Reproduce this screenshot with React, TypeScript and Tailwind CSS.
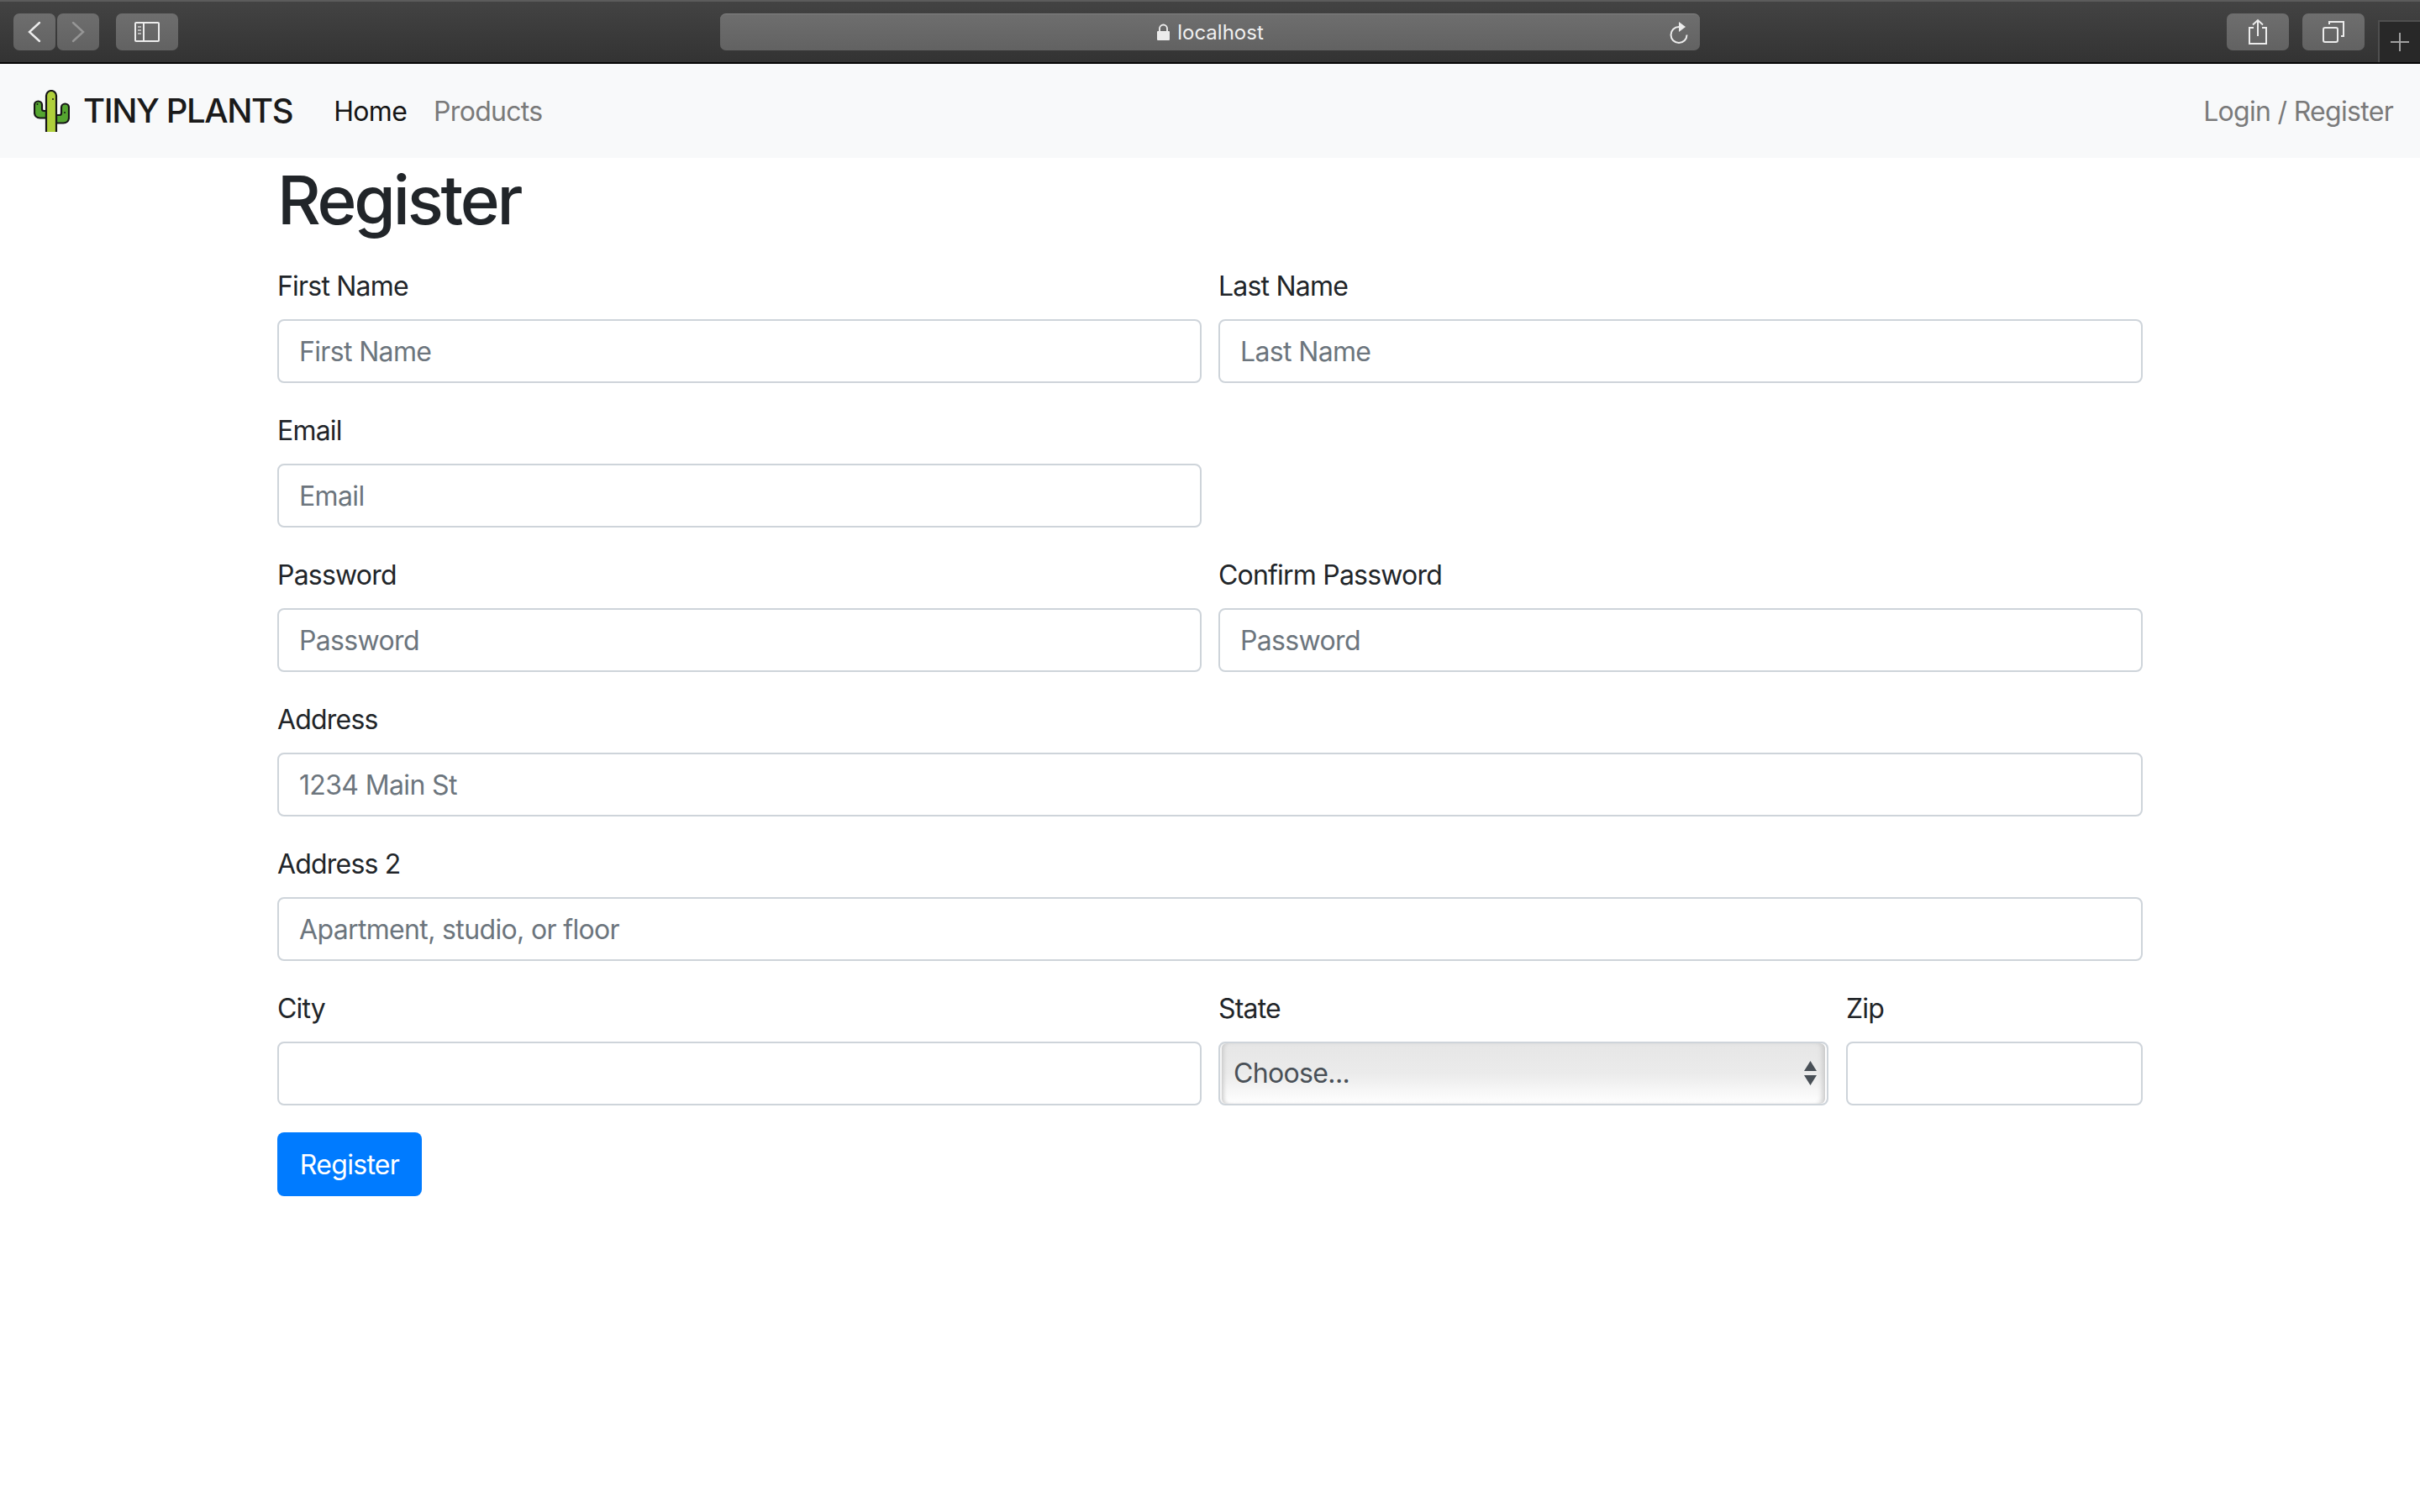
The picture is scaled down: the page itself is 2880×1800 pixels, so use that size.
import { ReactNode } from 'react';

const font = "font-['Inter','Liberation_Sans',sans-serif]";

function ToolButton({ className, children }: { className: string; children: ReactNode }) {
    return (
        <div className={`${className} h-[44px] flex items-center justify-center bg-gradient-to-b from-[#6e6e6e] to-[#626262]`}>
            {children}
        </div>
    );
}

function BrowserBar() {
    return (
        <div className="relative h-[76px] flex items-start justify-between pt-[14px] pl-[16px] pr-[66px] border-b-2 border-[#050505] border-t-2 border-t-[#5c5c5c] bg-gradient-to-b from-[#434343] to-[#333333]">
            <div className="flex">
                <ToolButton className="w-[50px] rounded-[7px]">
                    <svg width="16" height="26" viewBox="0 0 16 26" fill="none" stroke="#ececec" strokeWidth="2.4" strokeLinecap="round"><path d="M14 2 2 13l12 11" /></svg>
                </ToolButton>
                <ToolButton className="w-[50px] ml-[2px] rounded-[7px]">
                    <svg width="16" height="26" viewBox="0 0 16 26" fill="none" stroke="#969696" strokeWidth="2.4" strokeLinecap="round"><path d="M2 2l12 11L2 24" /></svg>
                </ToolButton>
                <ToolButton className="w-[74px] ml-[20px] rounded-[7px]">
                    <svg width="30" height="24" viewBox="0 0 30 24" fill="none" stroke="#ececec" strokeWidth="2">
                        <rect x="1" y="1" width="28" height="22" rx="1" />
                        <path d="M11 1v22" />
                        <path d="M4 6h4M4 10h4M4 14h4" stroke="#b5b5b5" />
                    </svg>
                </ToolButton>
            </div>
            <ToolButton className="absolute left-[857px] top-[14px] w-[1166px] rounded-[7px] border-t border-[#808080]">
                <div className="flex items-center gap-[8px]">
                    <svg width="17" height="21" viewBox="0 0 17 21" fill="none">
                        <path d="M4 10V6a4.500 4.500 0 0 1 9 0v4" stroke="#ececec" strokeWidth="1.9" />
                        <rect x="1" y="9" width="15" height="11" rx="1" fill="#ececec" />
                    </svg>
                    <span className="mt-[1px] text-[24px] leading-none text-[#f0f0f0]">localhost</span>
                </div>
                <svg className="absolute right-[13px] top-[8px]" width="24" height="28" viewBox="0 0 24 28" fill="none" stroke="#ececec" strokeWidth="2">
                    <path d="M12 7a9.500 9.500 0 1 0 9.500 9.500" />
                    <path d="M12 1l8 6-8 6z" fill="#ececec" stroke="none" />
                </svg>
            </ToolButton>
            <div className="flex gap-[16px]">
                <ToolButton className="w-[74px] rounded-[7px]">
                    <svg width="24" height="32" viewBox="0 0 24 32" fill="none" stroke="#ececec" strokeWidth="2">
                        <path d="M7 11H2v19h20V11h-5" />
                        <path d="M12 21V2M6 7.500 12 2l6 5.500" />
                    </svg>
                </ToolButton>
                <ToolButton className="w-[74px] rounded-[7px]">
                    <svg width="26" height="26" viewBox="0 0 26 26" fill="none" stroke="#ececec" strokeWidth="2">
                        <rect x="1" y="8" width="17" height="17" rx="2" />
                        <path d="M8 4V1h17v17h-3" />
                    </svg>
                </ToolButton>
            </div>
            <div className="absolute right-0 bottom-0 w-[50px] h-[50px] flex items-center justify-center bg-[#282828] border-l-2 border-t-2 border-[#4f4f4f]">
                <svg width="24" height="24" viewBox="0 0 24 24" stroke="#a0a0a0" strokeWidth="2"><path d="M12 1v22M1 12h22" /></svg>
            </div>
        </div>
    );
}

function Cactus() {
    return (
        <svg width="43" height="50" viewBox="0 0 43 50" fill="none" stroke="#161616" strokeWidth="2.2">
            <path d="M15 25h-3c-1.500 0-2-1-2-2.500V18a4.500 4.500 0 0 0-9 0v9c0 4 3 6.500 6.500 6.500H15z" fill="#55a630" />
            <path d="M27 30h4c1.500 0 2-1 2-2.500V21a4.500 4.500 0 0 1 9 0v12c0 4-3 6.500-6.500 6.500H27z" fill="#55a630" />
            <path d="M15 50V7a6 6 0 0 1 12 0v43" fill="#afcf3b" />
            <circle cx="23" cy="11" r="1" fill="#161616" stroke="none" />
            <circle cx="4.500" cy="17" r="1" fill="#161616" stroke="none" />
            <circle cx="37" cy="27" r="1" fill="#161616" stroke="none" />
        </svg>
    );
}

function Navbar() {
    return (
        <nav className="h-[112px] bg-[#f8f9fa] flex items-center pl-[40px] pr-[32px]">
            <Cactus />
            <span className="ml-[16px] text-[40px] leading-none tracking-[-1.4px] font-medium text-[#1a1a1a]">TINY PLANTS</span>
            <span className="ml-[49px] mt-[1px] text-[32px] leading-none tracking-[-0.7px] text-[#151515]">Home</span>
            <span className="ml-[32px] mt-[1px] text-[32px] leading-none tracking-[-0.7px] text-[#7a7a7a]">Products</span>
            <span className="ml-auto mt-[1px] text-[32px] leading-none tracking-[-0.7px] text-[#7a7a7a]">Login / Register</span>
        </nav>
    );
}

function Label({ children }: { children: ReactNode }) {
    return <label className="block h-[48px] leading-[48px] mb-[16px] pt-[1px] text-[32px] tracking-[-0.8px] text-[#212529]">{children}</label>;
}

function Field({ label, placeholder, className = '' }: { label: string; placeholder?: string; className?: string }) {
    return (
        <div className={className}>
            <Label>{label}</Label>
            <input
                type="text"
                placeholder={placeholder}
                className="block w-full h-[76px] px-[24px] text-[32px] tracking-[-0.65px] text-[#495057] placeholder:text-[#6c757d] bg-white border-2 border-[#ced4da] rounded-[8px] outline-none"
            />
        </div>
    );
}

function StateSelect() {
    return (
        <div className="w-[726px]">
            <Label>State</Label>
            <div className="relative">
                <select className="block w-full h-[76px] pl-[16px] pr-[40px] appearance-none text-[32px] tracking-[-0.65px] text-[#495057] bg-gradient-to-b from-[#e6e6e6] via-[#ebebeb] to-[#ffffff] border-2 border-[#ced4da] rounded-[8px] shadow-[inset_-2px_0_0_#ffffff,inset_-8px_0_6px_-3px_#c8c8c8,inset_2px_0_0_#f6f6f6,inset_7px_0_5px_-3px_#c8c8c8] outline-none">
                    <option>Choose...</option>
                </select>
                <svg className="absolute right-[14px] top-[23px]" width="15" height="29" viewBox="0 0 15 29" fill="#495057">
                    <path d="M7.500 0 15 12H0zM0 17h15L7.500 29z" />
                </svg>
            </div>
        </div>
    );
}

export default function App() {
    return (
        <div className={`${font} min-h-[1800px] bg-white`}>
            <BrowserBar />
            <Navbar />
            <main className="w-[2220px] ml-[330px]">
                <h1 className="h-[96px] leading-[96px] pt-[2px] mb-[32px] text-[80px] font-medium tracking-[-3.2px] text-[#212529]">Register</h1>
                <div className="flex gap-[20px] mb-[32px]">
                    <Field className="flex-1" label="First Name" placeholder="First Name" />
                    <Field className="flex-1" label="Last Name" placeholder="Last Name" />
                </div>
                <div className="flex gap-[20px] mb-[32px]">
                    <Field className="flex-1" label="Email" placeholder="Email" />
                    <div className="flex-1" />
                </div>
                <div className="flex gap-[20px] mb-[32px]">
                    <Field className="flex-1" label="Password" placeholder="Password" />
                    <Field className="flex-1" label="Confirm Password" placeholder="Password" />
                </div>
                <Field className="mb-[32px]" label="Address" placeholder="1234 Main St" />
                <Field className="mb-[32px]" label="Address 2" placeholder="Apartment, studio, or floor" />
                <div className="flex gap-[20px] mb-[32px]">
                    <Field className="flex-1" label="City" />
                    <div className="flex-1 flex gap-[21px]">
                        <StateSelect />
                        <Field className="flex-1" label="Zip" />
                    </div>
                </div>
                <button className="w-[172px] h-[76px] pt-[1px] text-[32px] tracking-[-0.7px] text-white bg-[#007bff] rounded-[8px]">Register</button>
            </main>
        </div>
    );
}
